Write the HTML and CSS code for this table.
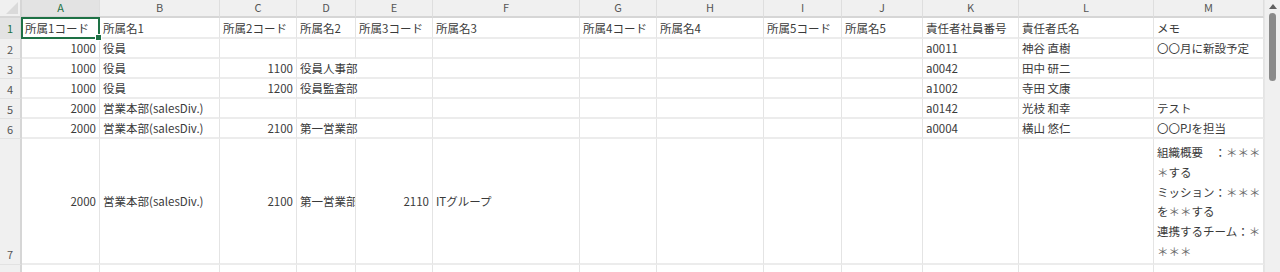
FILE: index.html
```html
<!DOCTYPE html>
<html lang="ja">
<head>
    <meta charset="UTF-8">
    <title>組織マスタ</title>
    <link rel="stylesheet" href="styles.css">
</head>
<body>
<div class="window">
    <div class="sheet">
        <!-- column headers -->
        <div class="corner"></div>
        <div class="ch active">A</div>
        <div class="ch">B</div>
        <div class="ch">C</div>
        <div class="ch">D</div>
        <div class="ch">E</div>
        <div class="ch">F</div>
        <div class="ch">G</div>
        <div class="ch">H</div>
        <div class="ch">I</div>
        <div class="ch">J</div>
        <div class="ch">K</div>
        <div class="ch">L</div>
        <div class="ch">M</div>

        <!-- 1 -->
        <div class="rh active">1</div>
        <div class="c selected">所属1コード</div>
        <div class="c">所属名1</div>
        <div class="c">所属2コード</div>
        <div class="c">所属名2</div>
        <div class="c">所属3コード</div>
        <div class="c">所属名3</div>
        <div class="c">所属4コード</div>
        <div class="c">所属名4</div>
        <div class="c">所属5コード</div>
        <div class="c">所属名5</div>
        <div class="c">責任者社員番号</div>
        <div class="c">責任者氏名</div>
        <div class="c">メモ</div>

        <!-- 2 -->
        <div class="rh">2</div>
        <div class="c num">1000</div>
        <div class="c">役員</div>
        <div class="c"></div>
        <div class="c"></div>
        <div class="c"></div>
        <div class="c"></div>
        <div class="c"></div>
        <div class="c"></div>
        <div class="c"></div>
        <div class="c"></div>
        <div class="c">a0011</div>
        <div class="c">神谷 直樹</div>
        <div class="c">〇〇月に新設予定</div>

        <!-- 3 -->
        <div class="rh">3</div>
        <div class="c num">1000</div>
        <div class="c">役員</div>
        <div class="c num">1100</div>
        <div class="c spill">役員人事部</div>
        <div class="c"></div>
        <div class="c"></div>
        <div class="c"></div>
        <div class="c"></div>
        <div class="c"></div>
        <div class="c"></div>
        <div class="c">a0042</div>
        <div class="c">田中 研二</div>
        <div class="c"></div>

        <!-- 4 -->
        <div class="rh">4</div>
        <div class="c num">1000</div>
        <div class="c">役員</div>
        <div class="c num">1200</div>
        <div class="c spill">役員監査部</div>
        <div class="c"></div>
        <div class="c"></div>
        <div class="c"></div>
        <div class="c"></div>
        <div class="c"></div>
        <div class="c"></div>
        <div class="c">a1002</div>
        <div class="c">寺田 文康</div>
        <div class="c"></div>

        <!-- 5 -->
        <div class="rh">5</div>
        <div class="c num">2000</div>
        <div class="c">営業本部(salesDiv.)</div>
        <div class="c"></div>
        <div class="c"></div>
        <div class="c"></div>
        <div class="c"></div>
        <div class="c"></div>
        <div class="c"></div>
        <div class="c"></div>
        <div class="c"></div>
        <div class="c">a0142</div>
        <div class="c">光枝 和幸</div>
        <div class="c">テスト</div>

        <!-- 6 -->
        <div class="rh">6</div>
        <div class="c num">2000</div>
        <div class="c">営業本部(salesDiv.)</div>
        <div class="c num">2100</div>
        <div class="c spill">第一営業部</div>
        <div class="c"></div>
        <div class="c"></div>
        <div class="c"></div>
        <div class="c"></div>
        <div class="c"></div>
        <div class="c"></div>
        <div class="c">a0004</div>
        <div class="c">横山 悠仁</div>
        <div class="c">〇〇PJを担当</div>

        <!-- 7 (tall row, wrapped memo) -->
        <div class="rh bottom">7</div>
        <div class="c num">2000</div>
        <div class="c">営業本部(salesDiv.)</div>
        <div class="c num">2100</div>
        <div class="c">第一営業部</div>
        <div class="c num">2110</div>
        <div class="c">ITグループ</div>
        <div class="c"></div>
        <div class="c"></div>
        <div class="c"></div>
        <div class="c"></div>
        <div class="c"></div>
        <div class="c"></div>
        <div class="c wrap">組織概要　：<span class="ast">＊＊＊</span><br><span class="ast">＊</span>する<br>ミッション：<span class="ast">＊＊＊</span><br>を<span class="ast">＊＊</span>する<br>連携するチーム：<span class="ast">＊</span><br><span class="ast">＊＊＊</span></div>

        <!-- 8 -->
        <div class="rh"></div>
        <div class="c"></div>
        <div class="c"></div>
        <div class="c"></div>
        <div class="c"></div>
        <div class="c"></div>
        <div class="c"></div>
        <div class="c"></div>
        <div class="c"></div>
        <div class="c"></div>
        <div class="c"></div>
        <div class="c"></div>
        <div class="c"></div>
        <div class="c"></div>
    </div>

    <div class="vscroll">
        <div class="arrow-up"></div>
        <div class="thumb"></div>
    </div>
</div>
</body>
</html>
```

FILE: styles.css
```css
* {
    box-sizing: border-box;
}
body {
    margin: 0;
    padding: 0;
    background: #fff;
    font-family: 'Noto Sans CJK JP', 'Noto Sans', sans-serif;
    font-size: 11.5px;
    color: #3a3a3a;
    overflow: hidden;
}
.window {
    display: flex;
    height: 272px;
}
.sheet {
    flex: 1;
    display: grid;
    grid-template-columns: 22px 78px 120px 77px 59px 77px 147px 77px 107px 78px 81px 96px 135px 110px;
    grid-template-rows: 18px 21px 20px 20px 20px 20px 20px 126px 20px;
    overflow: hidden;
}

/* headers */
.corner {
    position: relative;
    background: #f0f0f0;
    border-right: 2px solid #d6d6d6;
    border-bottom: 2px solid #d6d6d6;
}
.corner::after {
    content: '';
    position: absolute;
    right: 2px;
    bottom: 2px;
    border-left: 12px solid transparent;
    border-bottom: 12px solid #dadada;
}
.ch {
    background: #f0f0f0;
    border-right: 1px solid #dedede;
    border-bottom: 2px solid #d6d6d6;
    color: #555;
    font-size: 11px;
    text-align: center;
    line-height: 15px;
}
.rh {
    background: #f0f0f0;
    border-right: 2px solid #d6d6d6;
    border-bottom: 1px solid #e2e2e2;
    color: #555;
    font-size: 11px;
    display: flex;
    align-items: center;
    justify-content: center;
}
.rh.bottom {
    align-items: flex-end;
    padding-bottom: 2px;
}
.ch.active,
.rh.active {
    background: #e3e3e3;
    color: #1e7145;
}

/* cells */
.c {
    position: relative;
    border-right: 1px solid #e4e4e4;
    border-bottom: 2px solid #ececec;
    padding: 0 3px;
    white-space: nowrap;
    overflow: hidden;
    display: flex;
    align-items: center;
}
.c.num {
    justify-content: flex-end;
}
.c.spill {
    overflow: visible;
    border-right-color: transparent;
    z-index: 1;
}
.c.wrap {
    display: block;
    padding-top: 4px;
    line-height: 19.8px;
}
.ast {
    color: #666;
}
.c.selected {
    overflow: visible;
    z-index: 2;
}
.c.selected::before {
    content: '';
    position: absolute;
    left: -1px;
    top: -1px;
    right: -1px;
    bottom: -2px;
    border: 2px solid #1e7145;
}
.c.selected::after {
    content: '';
    position: absolute;
    right: -3px;
    bottom: -4px;
    width: 5px;
    height: 5px;
    background: #1e7145;
    border: 1px solid #fff;
}

/* vertical scrollbar */
.vscroll {
    width: 16px;
    background: #f0f0f0;
    border-left: 1px solid #e6e6e6;
    display: flex;
    flex-direction: column;
    align-items: center;
}
.arrow-up {
    margin-top: 4px;
    border-left: 4px solid transparent;
    border-right: 4px solid transparent;
    border-bottom: 5px solid #606060;
}
.thumb {
    margin-top: 4px;
    width: 7px;
    height: 68px;
    border-radius: 4px;
    background: #8a8a8a;
}
```
